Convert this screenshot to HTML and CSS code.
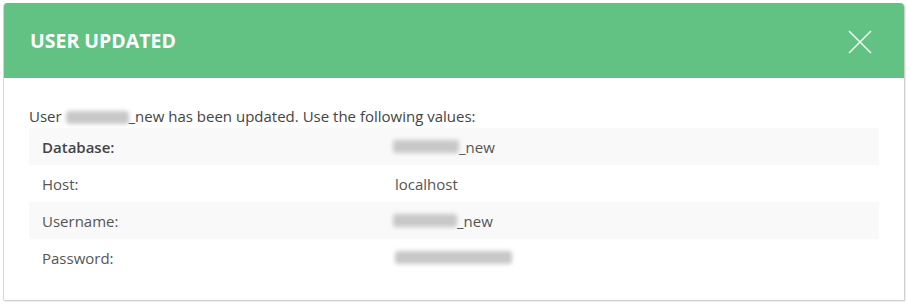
FILE: index.html
```html
<!DOCTYPE html>
<html lang="en">
<head>
    <meta charset="UTF-8">
    <title>User updated</title>
    <link rel="stylesheet" href="styles.css">
</head>
<body>
    <div class="dialog">
        <div class="dialog-header">
            <h2 class="dialog-title">USER UPDATED</h2>
            <button class="close-button" aria-label="Close">
                <svg width="24" height="24" viewBox="0 0 24 24">
                    <path d="M1 1 L23 23 M23 1 L1 23" stroke="#eef9f2" stroke-width="1.6" fill="none"/>
                </svg>
            </button>
        </div>
        <div class="dialog-body">
            <p class="intro">User <span class="blur w63"></span>_new has been updated. Use the following values:</p>
            <div class="values">
                <div class="row">
                    <div class="label strong">Database:</div>
                    <div class="value"><span class="blur w68"></span>_new</div>
                </div>
                <div class="row">
                    <div class="label">Host:</div>
                    <div class="value">localhost</div>
                </div>
                <div class="row">
                    <div class="label">Username:</div>
                    <div class="value"><span class="blur w66"></span>_new</div>
                </div>
                <div class="row">
                    <div class="label">Password:</div>
                    <div class="value"><span class="blur w117"></span></div>
                </div>
            </div>
        </div>
    </div>
</body>
</html>
```

FILE: styles.css
```css
body {
    margin: 0;
    padding: 3px;
    background-color: #ffffff;
    font-family: 'Open Sans', 'Liberation Sans', sans-serif;
}
.dialog {
    width: 901px;
    height: 297px;
    box-sizing: border-box;
    border-left: 1px solid #d4d4d4;
    border-radius: 4px 4px 0 0;
    box-shadow: 1px 1px 2px rgba(0, 0, 0, 0.25);
    background-color: #fff;
    overflow: hidden;
}
.dialog-header {
    height: 75px;
    background-color: #61c283;
    display: flex;
    align-items: center;
    justify-content: space-between;
    padding: 0 32px 0 26px;
}
.dialog-title {
    margin: 0;
    color: #fff;
    font-size: 19.5px;
    font-weight: 700;
}
.close-button {
    background: transparent;
    border: none;
    padding: 0;
    width: 24px;
    height: 24px;
    cursor: pointer;
    margin-top: 2px;
}
.close-button svg {
    display: block;
}
.dialog-body {
    padding: 28px 25px 0 25px;
    color: #555;
    font-size: 15px;
}
.intro {
    margin: 0;
    line-height: 20px;
    color: #444;
}
.values {
    margin-top: 2px;
}
.row {
    display: grid;
    grid-template-columns: 366px 1fr;
    height: 37px;
    align-items: center;
}
.row:nth-child(odd) {
    background-color: #f9f9f9;
}
.label {
    padding-left: 13px;
}
.label.strong {
    font-weight: 600;
    color: #444;
}
.value {
    display: flex;
    align-items: center;
}
.blur {
    display: inline-block;
    height: 13px;
    background-color: #c8c8c8;
    filter: blur(2px);
    border-radius: 3px;
    vertical-align: middle;
}
.w63 { width: 63px; }
.w66 { width: 64px; margin-left: -2px; }
.w68 { width: 66px; margin-left: -2px; }
.w117 { width: 117px; }
```
